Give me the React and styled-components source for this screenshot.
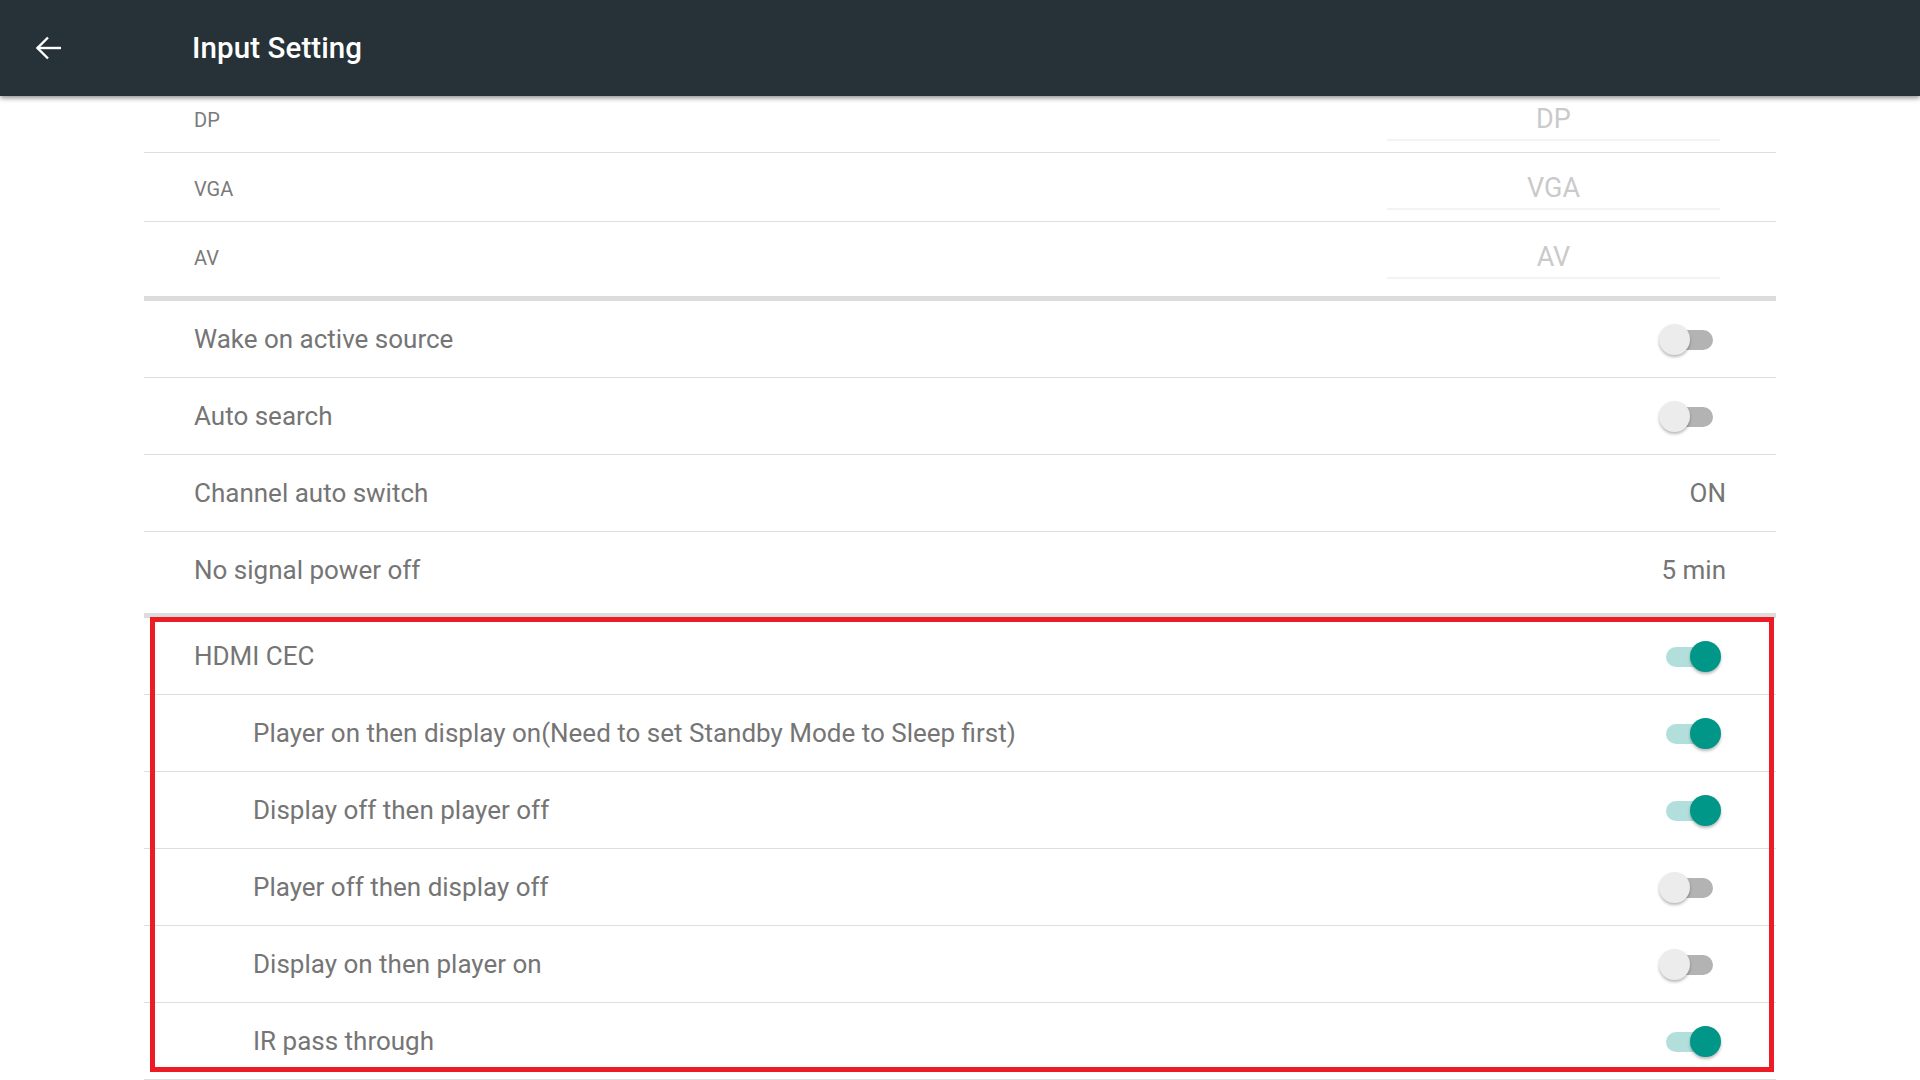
import React from 'react'
import styled, { createGlobalStyle } from 'styled-components'

const GlobalStyle = createGlobalStyle`
    html, body {
        margin: 0;
        padding: 0;
        background: #ffffff;
        font-family: Roboto, "Noto Sans", "Liberation Sans", sans-serif;
    }
    body {
        width: 1920px;
        height: 1080px;
        overflow: hidden;
    }
`

const Page = styled.div`
    width: 1920px;
    height: 1080px;
    display: flex;
    flex-flow: column nowrap;
    overflow: hidden;
`

const TopBar = styled.header`
    position: relative;
    z-index: 2;
    flex: 0 0 96px;
    height: 96px;
    background: #263238;
    display: flex;
    align-items: center;
    padding-left: 35px;
    box-shadow: 0 2px 5px rgba(0, 0, 0, 0.45);
`

const BackButton = styled.button`
    width: 26px;
    height: 26px;
    padding: 0;
    border: none;
    background: transparent;
    display: flex;
    align-items: center;
    justify-content: center;
    cursor: pointer;
`

const Title = styled.h1`
    margin: 0 0 0 131px;
    font-size: 29.5px;
    font-weight: 500;
    color: #ffffff;
    letter-spacing: 0.1px;
`

const List = styled.main`
    margin: -12px 144px 0;
    display: flex;
    flex-flow: column nowrap;
`

const InputRow = styled.div`
    height: 65px;
    padding: 3px 56px 0 50px;
    display: flex;
    align-items: center;
    justify-content: space-between;
    border-bottom: ${p => (p.$last ? 'none' : '1px solid #dedede')};
`

const InputLabel = styled.span`
    font-size: 20px;
    color: #7a7a7a;
`

const InputField = styled.div`
    width: 333px;
    height: 42px;
    display: flex;
    align-items: center;
    justify-content: center;
    font-size: 27px;
    color: #cacaca;
    border-bottom: 2px solid #f3f3f3;
    box-sizing: border-box;
`

const SectionDivider = styled.div`
    height: 5px;
    margin-top: ${p => p.$gap}px;
    background: #dcdcdc;
`

const SettingRow = styled.div`
    height: 76px;
    display: flex;
    align-items: center;
    justify-content: space-between;
    padding: 0 50px 0 ${p => (p.$sub ? 109 : 50)}px;
    border-bottom: ${p => (p.$last ? 'none' : '1px solid #dedede')};
`

const Label = styled.span`
    font-size: 26px;
    color: #757575;
`

const Value = styled.span`
    font-size: 26px;
    color: #757575;
`

const HighlightGroup = styled.section`
    position: relative;
    display: flex;
    flex-flow: column nowrap;
    &::after {
        content: '';
        position: absolute;
        top: -1px;
        left: 6px;
        right: 2px;
        bottom: 8px;
        border: 5px solid #ed1c24;
        pointer-events: none;
    }
`

const SwitchBox = styled.div`
    position: relative;
    width: 62px;
    height: 31px;
    margin-right: 5px;
`

const Track = styled.div`
    position: absolute;
    left: 7px;
    top: 6px;
    width: 47px;
    height: 20px;
    border-radius: 10px;
    background: ${p => (p.$on ? '#b2dfdb' : '#b3b3b3')};
`

const Thumb = styled.div`
    position: absolute;
    top: 0;
    left: ${p => (p.$on ? 31 : 0)}px;
    width: 31px;
    height: 31px;
    border-radius: 50%;
    background: ${p => (p.$on ? '#009688' : '#ececec')};
    box-shadow: 0 2px 3px rgba(0, 0, 0, 0.28);
`

const Switch = ({ on }) => (
    <SwitchBox>
        <Track $on={on} />
        <Thumb $on={on} />
    </SwitchBox>
)

const BackArrow = () => (
    <svg width="26" height="26" viewBox="0 0 26 26" fill="none" stroke="#ffffff" strokeWidth="2.4" strokeLinecap="square">
        <line x1="25" y1="13" x2="3" y2="13" />
        <polyline points="13,2.5 2.5,13 13,23.5" strokeLinecap="butt" />
    </svg>
)

const inputs = ['DP', 'VGA', 'AV']

const general = [
    { label: 'Wake on active source', switch: false },
    { label: 'Auto search', switch: false },
    { label: 'Channel auto switch', value: 'ON' },
    { label: 'No signal power off', value: '5 min' },
]

const cec = [
    { label: 'HDMI CEC', on: true },
    { label: 'Player on then display on(Need to set Standby Mode to Sleep first)', on: true, sub: true },
    { label: 'Display off then player off', on: true, sub: true },
    { label: 'Player off then display off', on: false, sub: true },
    { label: 'Display on then player on', on: false, sub: true },
    { label: 'IR pass through', on: true, sub: true },
]

export default function App() {
    return <>
        <GlobalStyle />
        <Page>
            <TopBar>
                <BackButton aria-label="Back"><BackArrow /></BackButton>
                <Title>Input Setting</Title>
            </TopBar>
            <List>
                {inputs.map((name, i) =>
                    <InputRow key={name} $last={i === inputs.length - 1}>
                        <InputLabel>{name}</InputLabel>
                        <InputField>{name}</InputField>
                    </InputRow>
                )}
                <SectionDivider $gap={6} />
                {general.map((item, i) =>
                    <SettingRow key={item.label} $last={i === general.length - 1}>
                        <Label>{item.label}</Label>
                        {item.value ? <Value>{item.value}</Value> : <Switch on={item.switch} />}
                    </SettingRow>
                )}
                <SectionDivider $gap={5} />
                <HighlightGroup>
                    {cec.map(item =>
                        <SettingRow key={item.label} $sub={item.sub}>
                            <Label>{item.label}</Label>
                            <Switch on={item.on} />
                        </SettingRow>
                    )}
                </HighlightGroup>
            </List>
        </Page>
    </>
}
